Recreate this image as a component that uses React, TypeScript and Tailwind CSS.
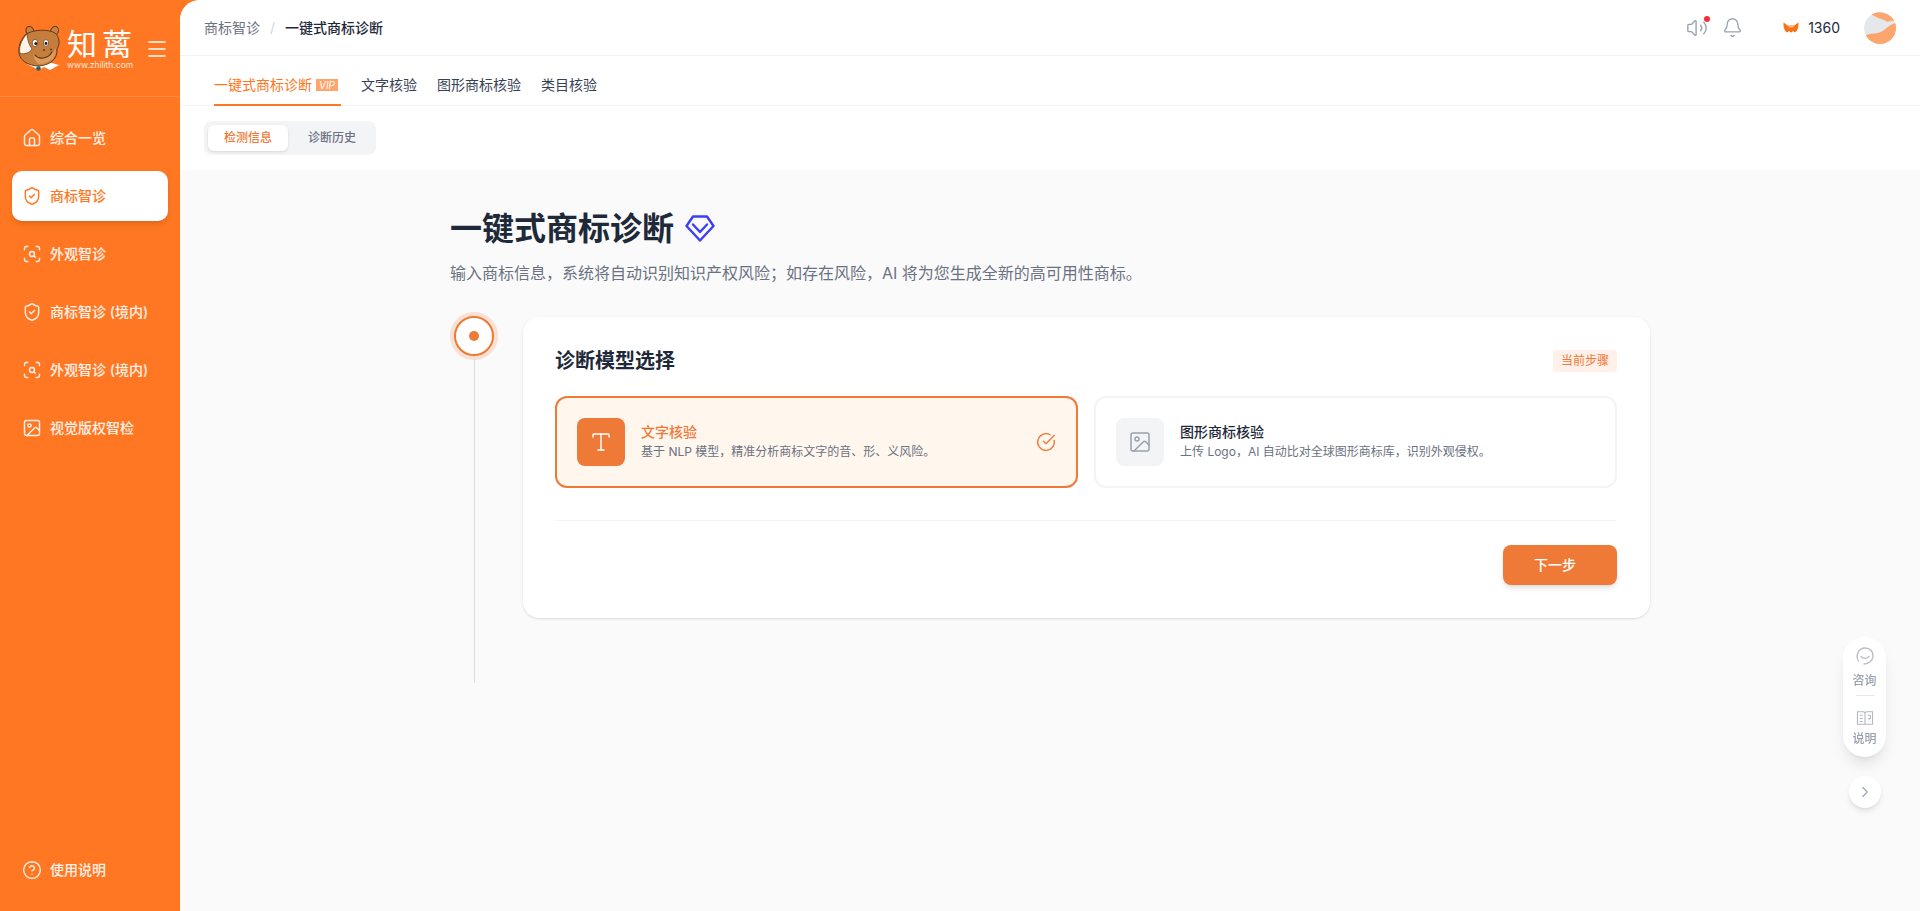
import { Bell, ChevronRight, CircleCheckBig, CircleHelp, House, Image, Menu, ScanSearch, ShieldCheck, Type, Volume2 } from 'lucide-react';

const navItems = [
  { label: '综合一览', icon: House },
  { label: '商标智诊', icon: ShieldCheck, active: true },
  { label: '外观智诊', icon: ScanSearch },
  { label: '商标智诊 (境内)', icon: ShieldCheck },
  { label: '外观智诊 (境内)', icon: ScanSearch },
  { label: '视觉版权智检', icon: Image },
];

const RhinoLogo = () => (
  <svg viewBox="0 0 44 45" className="w-[44px] h-[45px] shrink-0">
    {/* collar */}
    <path d="M9 38 L21 44 L26 41 L32 44 L41 39 L30 36 L18 36 Z" fill="#fff" />
    <circle cx="20.500" cy="42.500" r="2.300" fill="#2f5d6b" />
    {/* ears */}
    <ellipse cx="12" cy="5" rx="3.800" ry="4.800" fill="#c9813f" stroke="#5a3215" strokeWidth="0.900" transform="rotate(-30 12 5)" />
    <ellipse cx="36.500" cy="5" rx="3.800" ry="4.800" fill="#c9813f" stroke="#5a3215" strokeWidth="0.900" transform="rotate(25 36.500 5)" />
    {/* head */}
    <path d="M7 9 C14 3 31 3 37 7 C42 11 42 19 39 23 C40 32 33 39 21 40 C11 40 2 35 1 27 C0 20 3 14 7 9 Z" fill="#c47d3c" stroke="#5a3215" strokeWidth="0.900" />
    {/* horn */}
    <path d="M9 8 C3 14 0.500 22 2 27.500 C6 28.500 12 27 14 23 C11 19 9.500 14 9 8 Z" fill="#fbf3e6" stroke="#5a3215" strokeWidth="0.700" />
    {/* snout */}
    <path d="M15 27 C20 35 32 33 38 22 C39 31 32 38 22 38 C18 38 16 32 15 27 Z" fill="#dc9a5c" />
    <path d="M17 29 C21 34 30 33 34 26" fill="none" stroke="#5a3215" strokeWidth="1.100" strokeLinecap="round" />
    {/* eyes */}
    <ellipse cx="17" cy="17" rx="2.800" ry="3.600" fill="#fff" stroke="#5a3215" strokeWidth="0.700" />
    <circle cx="17.800" cy="17.500" r="1.500" fill="#2b1608" />
    <ellipse cx="28" cy="17" rx="2.600" ry="3.400" fill="#fff" stroke="#5a3215" strokeWidth="0.700" />
    <circle cx="28" cy="17.500" r="1.400" fill="#2b1608" />
    <circle cx="26" cy="24" r="0.900" fill="#5a3215" />
    <circle cx="33" cy="23.500" r="0.900" fill="#5a3215" />
  </svg>
);

const Sidebar = () => (
  <aside className="w-[180px] shrink-0 flex flex-col text-white">
    <div className="h-[97px] border-b border-white/15 flex items-center pl-[18px] pt-[1px]">
      <RhinoLogo />
      <div className="ml-[5px] w-[66px]">
        <div className="text-[30px] leading-[32px] tracking-[5px] whitespace-nowrap">知蓠</div>
        <div className="text-[8.5px] leading-[10px] text-white/80 whitespace-nowrap">www.zhilith.com</div>
      </div>
      <Menu size={24} strokeWidth={1.5} className="ml-[12px]" />
    </div>
    <nav className="flex flex-col gap-2 pt-4 px-3">
      {navItems.map((item) => (
        <a
          key={item.label}
          className={`h-[50px] rounded-[10px] flex items-center gap-2 px-[10px] text-sm font-medium ${
            item.active ? 'bg-white text-[#ff7722] shadow-md' : 'text-white/90'
          }`}
        >
          <item.icon size={20} strokeWidth={1.7} />
          <span>{item.label}</span>
        </a>
      ))}
    </nav>
    <div className="mt-auto mb-[16px] mx-3 h-[50px] flex items-center gap-2 px-[10px] text-sm font-medium text-white/90">
      <CircleHelp size={20} strokeWidth={1.7} />
      <span>使用说明</span>
    </div>
  </aside>
);

const Header = () => (
  <header className="h-[56px] shrink-0 border-b border-gray-100 flex items-center pl-[24px] pr-[24px]">
    <span className="text-sm text-gray-500">商标智诊</span>
    <span className="text-sm text-gray-300 mx-[10px]">/</span>
    <span className="text-sm font-medium text-gray-800">一键式商标诊断</span>
    <div className="ml-auto flex items-center">
      <div className="relative">
        <Volume2 size={22} strokeWidth={1.5} className="text-gray-400" />
        <span className="absolute -top-[1px] right-[-2px] w-[6px] h-[6px] rounded-full bg-red-500" />
      </div>
      <Bell size={21} strokeWidth={1.5} className="text-gray-400 ml-[14px]" />
      <svg viewBox="0 0 16 11" className="w-[16px] h-[11px] ml-[40px]">
        <path d="M0.500 0.500 C2 1.500 3.500 2.500 4.500 3.500 H11.500 C12.500 2.500 14 1.500 15.500 0.500 C15.800 5 14.500 9 12 10.500 L10 9 L8 10.800 L6 9 L4 10.500 C1.500 9 0.200 5 0.500 0.500 Z" fill="#f97316" />
        <path d="M4.500 3.500 H11.500 L10 5.500 H6 Z" fill="#fdba74" />
      </svg>
      <span className="ml-[9px] text-[14px] text-gray-800">1360</span>
      <svg viewBox="0 0 32 32" className="w-[32px] h-[32px] ml-[24px] rounded-full">
        <circle cx="16" cy="16" r="16" fill="#e5e7eb" />
        <path d="M7 2 C16 -2 26 1 32 10 C28 8 26 9 24 10 C20 7 14 7 7 2 Z" fill="#fca56f" />
        <path d="M2 23 C10 20 14 23 20 18 C24 15 27 12 32 11 V32 H2 Z" fill="#fca56f" />
      </svg>
    </div>
  </header>
);

const Tabs = () => (
  <div className="h-[50px] shrink-0 border-b border-gray-100 flex items-end gap-[20px] pl-[34px] text-sm text-gray-700">
    <div className="h-[50px] flex items-center gap-1 border-b-2 border-[#ff7722] text-[#ff7722] -mb-px pr-[3px] pt-[10px]">
      <span>一键式商标诊断</span>
      <span className="h-[12px] px-[3px] bg-[#ffa56b] text-white text-[10px] leading-[12px] italic">VIP</span>
    </div>
    <div className="h-[50px] flex items-center pt-[9px]">文字核验</div>
    <div className="h-[50px] flex items-center pt-[9px]">图形商标核验</div>
    <div className="h-[50px] flex items-center pt-[9px]">类目核验</div>
  </div>
);

const OptionCard = ({ title, desc, active, icon: Icon }: { title: string; desc: string; active?: boolean; icon: typeof Type }) => (
  <div
    className={`flex-1 h-[92px] rounded-[12px] border-2 p-5 flex items-center gap-4 ${
      active ? 'border-[#ef7936] bg-[#fff6ee]' : 'border-gray-100 bg-white'
    }`}
  >
    <div
      className={`w-12 h-12 rounded-[8px] flex items-center justify-center ${
        active ? 'bg-[#ef7936] text-white' : 'bg-gray-100 text-gray-400'
      }`}
    >
      <Icon size={24} strokeWidth={1.5} />
    </div>
    <div className="flex-1 -mt-[2px]">
      <div className={`text-sm leading-5 font-medium ${active ? 'text-[#ef7936]' : 'text-gray-800'}`}>{title}</div>
      <div className="text-xs leading-4 text-gray-500 mt-[2px]">{desc}</div>
    </div>
    {active && <CircleCheckBig size={20} strokeWidth={1.6} className="text-[#ef7936]" />}
  </div>
);

const FloatingTools = () => (
  <div className="fixed right-[34px] top-[637px] flex flex-col items-center">
    <div className="w-[43px] h-[120px] rounded-full bg-white shadow-lg flex flex-col items-center pt-[9px] text-xs leading-4 font-medium text-gray-400">
      <svg viewBox="0 0 20 20" fill="none" stroke="#bcbfc4" strokeWidth="1.400" strokeLinecap="round" className="w-[20px] h-[20px]">
        <path d="M3.500 15 C0.500 10 3 2 10 2 C15.500 2 18.500 6 18 10.500 C17.500 14.500 14 18 9 18" />
        <path d="M6 10.500 C8 13 12 13 14 10.500" />
      </svg>
      <span className="mt-[7px]">咨询</span>
      <span className="w-[18px] h-px bg-gray-200 mt-[6px]" />
      <svg viewBox="0 0 20 18" fill="none" stroke="#b4b7bc" strokeWidth="1.200" className="w-[18px] h-[16px] mt-[14px]">
        <path d="M1.500 2 H8 C9 2 10 3 10 4 V16 H1.500 Z M10 4 C10 3 11 2 12 2 H18.500 V16 H10" />
        <path d="M4 6 H7.500 M4 9.500 H7.500 M4 13 H7.500 M13 6 H16 V9.500 H14.500 V11 M14.500 13 V13.500" />
      </svg>
      <span className="mt-[5px]">说明</span>
    </div>
    <div className="w-[32px] h-[32px] mt-[19px] rounded-full bg-white shadow-md flex items-center justify-center">
      <ChevronRight size={18} strokeWidth={1.5} className="text-gray-400" />
    </div>
  </div>
);

export default function App() {
  return (
    <div className="h-screen w-full flex bg-[#ff7722] overflow-hidden font-['Inter','Noto_Sans_CJK_SC',sans-serif]">
      <Sidebar />
      <main className="flex-1 min-w-0 rounded-tl-[20px] overflow-hidden bg-[#fafafa] flex flex-col">
        <div className="bg-white h-[170px] shrink-0 flex flex-col">
          <Header />
          <Tabs />
          <div className="pl-[24px] pt-[15px]">
            <div className="inline-flex gap-1 p-1 h-[34px] rounded-[8px] bg-gray-100 text-xs font-medium">
              <div className="h-[26px] px-4 rounded-[6px] bg-white shadow-sm text-[#ef7936] flex items-center">检测信息</div>
              <div className="h-[26px] px-4 text-gray-500 flex items-center">诊断历史</div>
            </div>
          </div>
        </div>

        <div className="w-[1200px] mx-auto pt-[39px]">
          <div className="flex items-center gap-[11px] h-[40px]">
            <h1 className="text-[32px] leading-[40px] font-bold text-gray-800">一键式商标诊断</h1>
            <svg viewBox="0 0 30 27" fill="none" stroke="#3b3ff5" strokeWidth="2.400" strokeLinejoin="round" className="w-[30px] h-[27px] -mt-[2px]">
              <path d="M8 1.500 H22 L28.500 11 L15 25.500 L1.500 11 Z" />
              <path d="M8 9.500 L15 17 L22 9.500" strokeLinecap="round" />
            </svg>
          </div>
          <p className="text-base leading-6 text-gray-500 mt-3">
            输入商标信息，系统将自动识别知识产权风险；如存在风险，AI 将为您生成全新的高可用性商标。
          </p>

          <div className="flex gap-[25px] mt-[32px]">
            <div className="w-[48px] flex flex-col items-center shrink-0 -mt-[1px]">
              <div className="w-10 h-10 rounded-full border-2 border-[#ef7936] bg-white ring-4 ring-[#ef7936]/20 flex items-center justify-center">
                <span className="w-[10px] h-[10px] rounded-full bg-[#ef7936]" />
              </div>
              <div className="w-px h-[327px] bg-[#dcdde0]" />
            </div>

            <section className="flex-1 h-[301px] rounded-[16px] bg-white shadow-sm pl-[32px] pr-[33px] pt-[32px]">
              <div className="flex items-center justify-between h-[24px]">
                <h2 className="text-xl font-semibold text-gray-800">诊断模型选择</h2>
                <span className="h-[22px] px-2 rounded-[4px] bg-[#fff1ea] text-xs leading-[22px] text-[#ef7936]">当前步骤</span>
              </div>
              <div className="flex gap-4 mt-[23px]">
                <OptionCard active icon={Type} title="文字核验" desc="基于 NLP 模型，精准分析商标文字的音、形、义风险。" />
                <OptionCard icon={Image} title="图形商标核验" desc="上传 Logo，AI 自动比对全球图形商标库，识别外观侵权。" />
              </div>
              <div className="mt-8 pt-6 border-t border-gray-100 flex justify-end">
                <button className="w-[114px] h-[40px] pr-[10px] rounded-[8px] bg-[#ef7936] text-white text-sm font-medium shadow-md">下一步</button>
              </div>
            </section>
          </div>
        </div>
      </main>
      <FloatingTools />
    </div>
  );
}
